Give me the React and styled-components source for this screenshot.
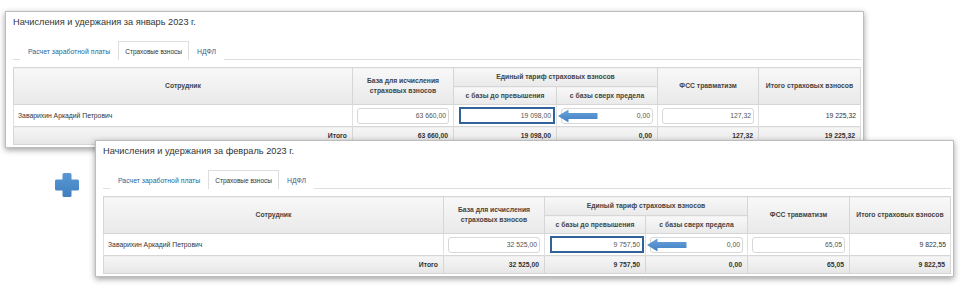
import React from "react";
import styled, { createGlobalStyle } from "styled-components";

const Global = createGlobalStyle`
  html, body { margin: 0; padding: 0; background: #fff; }
  body { font-family: "Liberation Sans", Arial, sans-serif; }
`;

const Stage = styled.div`
  position: relative;
  width: 960px;
  height: 286px;
  background: #fff;
  overflow: hidden;
`;

const Window = styled.section`
  position: absolute;
  left: ${(p) => p.$left}px;
  top: ${(p) => p.$top}px;
  background: #fff;
  border: 1px solid #bdbdbd;
  box-shadow: 0 2px 6px rgba(0, 0, 0, 0.38);
  padding: 4px 2px 2px 7px;
  display: flex;
  flex-direction: column;
`;

const Title = styled.h2`
  margin: 0;
  font-weight: normal;
  font-size: 9.2px;
  line-height: 12px;
  color: #333;
`;

const TabBar = styled.div`
  margin-top: 13px;
  display: flex;
  height: 18px;
  border-bottom: 1px solid #dedede;
  padding-left: 7px;
`;

const Tab = styled.div`
  display: flex;
  align-items: center;
  padding: 0 ${(p) => (p.$active ? 6 : 7)}px;
  font-size: ${(p) => (p.$active ? 6.5 : 6.9)}px;
  color: ${(p) => (p.$active ? "#333" : "#2b6496")};
  background: #fff;
  border: 1px solid ${(p) => (p.$active ? "#dedede" : "transparent")};
  border-bottom: none;
  margin-bottom: -1px;
  height: 19px;
  box-sizing: border-box;
`;

const Table = styled.table`
  margin-top: 7px;
  border-collapse: collapse;
  table-layout: fixed;
  width: 847px;
  font-size: 6.8px;
  color: #333;
  border: 1px solid #d6d6d6;
`;

const Th = styled.th`
  background: linear-gradient(#f8f8f8, #e9e9e9);
  border: 1px solid #d6d6d6;
  font-weight: bold;
  color: #444;
  text-align: center;
  vertical-align: middle;
  padding: 0 4px;
  line-height: 10px;
  height: ${(p) => p.$h || 17}px;
  box-sizing: border-box;
`;

const Td = styled.td`
  position: relative;
  border-left: 1px solid #e0e0e0;
  border-right: 1px solid #e0e0e0;
  height: 21px;
  padding: ${(p) => (p.$name ? "0 0 0 4px" : "0 4px")};
  text-align: ${(p) => (p.$name ? "left" : "right")};
  background: #fff;
  color: #333;
  white-space: nowrap;
`;

const TotalTd = styled.td`
  background: linear-gradient(#f6f6f6, #e6e6e6);
  border: 1px solid #d6d6d6;
  height: 17px;
  padding: 0 5px;
  text-align: right;
  font-weight: bold;
  color: #333;
`;

const Field = styled.div`
  box-sizing: border-box;
  height: ${(p) => (p.$focus ? 17 : 16)}px;
  margin: ${(p) => (p.$focus ? "0 -3px 0 1px" : "0")};
  border: ${(p) => (p.$focus ? "2px solid #33629a" : "1px solid #d8d8d8")};
  border-radius: ${(p) => (p.$focus ? "0" : "3px")};
  background: #fff;
  display: flex;
  align-items: center;
  justify-content: flex-end;
  padding-right: 2px;
  color: #555;
`;

const ArrowSlot = styled.div`
  position: absolute;
  left: 1px;
  top: 50%;
  transform: translateY(-50%);
  width: 40px;
  height: 13px;
  display: flex;
`;

const PlusSlot = styled.div`
  position: absolute;
  left: 55px;
  top: 173px;
  width: 24px;
  height: 24px;
  display: flex;
`;

function Arrow() {
  return (
    <ArrowSlot>
      <svg width="40" height="13" viewBox="0 0 40 13">
        <defs>
          <linearGradient id="ag" x1="0" y1="0" x2="0" y2="1">
            <stop offset="0" stopColor="#6aa3db" />
            <stop offset="1" stopColor="#3f7fc2" />
          </linearGradient>
        </defs>
        <path d="M0 6.5 L10.5 0 L10.5 3.5 L39.5 3.5 L39.5 9.5 L10.5 9.5 L10.5 13 Z" fill="url(#ag)" />
      </svg>
    </ArrowSlot>
  );
}

function Plus() {
  return (
    <PlusSlot>
      <svg width="24" height="24" viewBox="0 0 24 24">
        <defs>
          <linearGradient id="pg" x1="0" y1="0" x2="0" y2="1">
            <stop offset="0" stopColor="#5b97d4" />
            <stop offset="1" stopColor="#3f7fc0" />
          </linearGradient>
        </defs>
        <path
          d="M7.5 1.5 Q7.5 0 9 0 L15 0 Q16.5 0 16.5 1.5 L16.5 6.5 L22.5 6.5 Q24 6.5 24 8 L24 16 Q24 17.5 22.5 17.5 L16.5 17.5 L16.5 22.5 Q16.5 24 15 24 L9 24 Q7.5 24 7.5 22.5 L7.5 17.5 L1.5 17.5 Q0 17.5 0 16 L0 8 Q0 6.5 1.5 6.5 L7.5 6.5 Z"
          fill="url(#pg)"
        />
      </svg>
    </PlusSlot>
  );
}

function Sheet({ left, top, month, cols, base, within, above, fss, total }) {
  return (
    <Window $left={left} $top={top}>
      <Title>Начисления и удержания за {month} 2023 г.</Title>
      <TabBar>
        <Tab>Расчет заработной платы</Tab>
        <Tab $active>Страховые взносы</Tab>
        <Tab>НДФЛ</Tab>
      </TabBar>
      <Table>
        <colgroup>
          {cols.map((w, i) => (
            <col key={i} style={{ width: w }} />
          ))}
        </colgroup>
        <thead>
          <tr>
            <Th rowSpan={2}>Сотрудник</Th>
            <Th rowSpan={2}>
              База для исчисления
              <br />
              страховых взносов
            </Th>
            <Th colSpan={2} $h={19}>Единый тариф страховых взносов</Th>
            <Th rowSpan={2}>ФСС травматизм</Th>
            <Th rowSpan={2}>Итого страховых взносов</Th>
          </tr>
          <tr>
            <Th $h={18}>с базы до превышения</Th>
            <Th $h={18}>с базы сверх предела</Th>
          </tr>
        </thead>
        <tbody>
          <tr>
            <Td $name>Заварихин Аркадий Петрович</Td>
            <Td>
              <Field>{base}</Field>
            </Td>
            <Td>
              <Field $focus>{within}</Field>
            </Td>
            <Td>
              <Field>{above}</Field>
              <Arrow />
            </Td>
            <Td>
              <Field>{fss}</Field>
            </Td>
            <Td>{total}</Td>
          </tr>
          <tr>
            <TotalTd>Итого</TotalTd>
            <TotalTd>{base}</TotalTd>
            <TotalTd>{within}</TotalTd>
            <TotalTd>{above}</TotalTd>
            <TotalTd>{fss}</TotalTd>
            <TotalTd>{total}</TotalTd>
          </tr>
        </tbody>
      </Table>
    </Window>
  );
}

export default function App() {
  return (
    <Stage>
      <Global />
      <Sheet
        left={5}
        top={11}
        month="январь"
        cols={[339, 101, 103, 101, 101, 102]}
        base="63 660,00"
        within="19 098,00"
        above="0,00"
        fss="127,32"
        total="19 225,32"
      />
      <Plus />
      <Sheet
        left={95}
        top={140}
        month="февраль"
        cols={[340, 101, 101, 102, 102, 101]}
        base="32 525,00"
        within="9 757,50"
        above="0,00"
        fss="65,05"
        total="9 822,55"
      />
    </Stage>
  );
}
